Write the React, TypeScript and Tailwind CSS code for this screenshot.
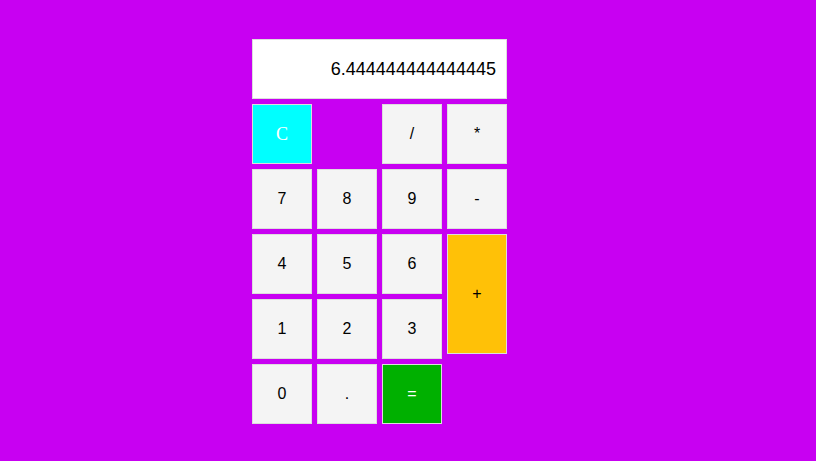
import React from 'react';

const Key = ({ label, className = '' }: { label: string; className?: string }) => (
  <button
    className={`w-[60px] h-[60px] border border-[#dddddd] flex items-center justify-center text-base text-black ${className}`}
  >
    {label}
  </button>
);

export default function App() {
  return (
    <div className="w-[816px] h-[461px] bg-[#c800f2] pl-[252px] pt-[39px] [font-family:'Liberation_Sans',Arial,sans-serif]">
      <div className="w-[255px]">
        <div className="h-[60px] bg-white border border-[#dddddd] flex items-center justify-end pr-[10px] text-[18px] text-black mb-[5px]">
          6.444444444444445
        </div>
        <div className="grid grid-cols-[repeat(4,60px)] auto-rows-[60px] gap-[5px]">
          <Key label="C" className="bg-[#00ffff] !text-white [font-family:'Liberation_Serif','Times_New_Roman',serif] !text-[18px]" />
          <div />
          <Key label="/" className="bg-[#f4f4f4]" />
          <Key label="*" className="bg-[#f4f4f4]" />

          <Key label="7" className="bg-[#f4f4f4]" />
          <Key label="8" className="bg-[#f4f4f4]" />
          <Key label="9" className="bg-[#f4f4f4]" />
          <Key label="-" className="bg-[#f4f4f4]" />

          <Key label="4" className="bg-[#f4f4f4]" />
          <Key label="5" className="bg-[#f4f4f4]" />
          <Key label="6" className="bg-[#f4f4f4]" />
          <Key label="+" className="bg-[#ffc107] row-span-2 !h-[120px] self-start" />

          <Key label="1" className="bg-[#f4f4f4]" />
          <Key label="2" className="bg-[#f4f4f4]" />
          <Key label="3" className="bg-[#f4f4f4]" />

          <Key label="0" className="bg-[#f4f4f4]" />
          <Key label="." className="bg-[#f4f4f4]" />
          <Key label="=" className="bg-[#00b000] !text-white" />
        </div>
      </div>
    </div>
  );
}
